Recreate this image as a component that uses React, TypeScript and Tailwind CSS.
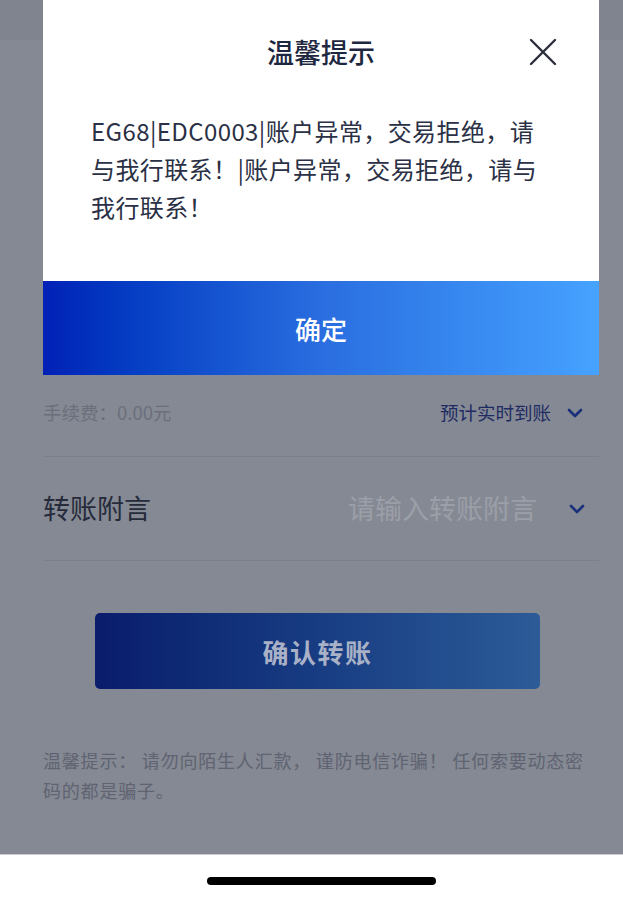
import { useState } from "react";

const font = { fontFamily: '"Noto Sans CJK SC", "Noto Sans", sans-serif' };

function Chevron({ className }: { className?: string }) {
  return (
    <svg viewBox="0 0 16 10" className={className} fill="none">
      <polyline points="2,2 8,8 14,2" stroke="currentColor" strokeWidth="2.6" strokeLinecap="round" strokeLinejoin="round" />
    </svg>
  );
}

function CloseIcon() {
  return (
    <svg viewBox="0 0 28 28" className="w-[28px] h-[28px]" fill="none">
      <path d="M2 2 L26 26 M26 2 L2 26" stroke="#2b2f3a" strokeWidth="2.4" strokeLinecap="round" />
    </svg>
  );
}

export default function App() {
  const [open, setOpen] = useState(true);

  return (
    <div className="relative w-[623px] h-[907px] overflow-hidden bg-white" style={font}>
      {/* ====== page behind the dialog (dimmed) ====== */}
      <div className="h-[854px] bg-[#858993] flex flex-col">
        <div className="h-[40px] bg-[#80848e]" />
        <div className="h-[335px]" />

        <div className="pl-[43px] pr-[24px]">
          <div className="h-[82px] flex items-center justify-between pb-[6px] border-b border-[#7c808a]">
            <span className="text-[18.5px] text-[#6b6f7c]">手续费：0.00元</span>
            <div className="flex items-center gap-[16px] pr-[16px]">
              <span className="text-[18.5px] text-[#1e2c63]">预计实时到账</span>
              <Chevron className="w-[16px] h-[10px] text-[#1a2f7a]" />
            </div>
          </div>

          <div className="h-[104px] flex items-center justify-between border-b border-[#7c808a]">
            <span className="text-[27px] text-[#262b3b]">转账附言</span>
            <div className="flex items-center gap-[32px] pr-[14px]">
              <span className="text-[27px] text-[#9b9fa8]">请输入转账附言</span>
              <Chevron className="w-[16px] h-[10px] text-[#1a2f7a]" />
            </div>
          </div>

          <div className="mt-[52px] ml-[52px] w-[445px] h-[76px] rounded-[5px] bg-gradient-to-r from-[#0a1c6c] to-[#2c5b98] flex items-center justify-center">
            <span className="text-[26px] font-bold text-[#a9b1c7] tracking-[1.5px]">确认转账</span>
          </div>

          <p className="mt-[56px] text-[18px] leading-[30px] tracking-[0.8px] text-[#5f6372]">
            温馨提示： 请勿向陌生人汇款， 谨防电信诈骗！ 任何索要动态密<br />码的都是骗子。
          </p>
        </div>
      </div>

      {/* ====== home indicator area ====== */}
      <div className="h-[53px] bg-white border-t border-[#c9cbd1] flex items-center pl-[207px]">
        <div className="w-[229px] h-[8px] rounded-full bg-black" />
      </div>

      {/* ====== dialog ====== */}
      {open && (
        <div className="absolute left-[43px] top-0 w-[556px] bg-white">
          <div className="h-[281px] px-[48px] pt-[34px]">
            <div className="relative h-[36px] flex items-center justify-center">
              <h2 className="text-[27px] leading-[36px] font-medium text-[#1e2740]">温馨提示</h2>
              <button onClick={() => setOpen(false)} className="absolute right-[-6px] top-[4px]">
                <CloseIcon />
              </button>
            </div>
            <p className="mt-[42px] text-[24px] leading-[38px] tracking-[0.4px] text-[#2a3045]">
              EG68|EDC0003|账户异常，交易拒绝，请
              <br />
              与我行联系！|账户异常，交易拒绝，请与
              <br />
              我行联系！
            </p>
          </div>
          <button className="w-full h-[94px] bg-gradient-to-r from-[#0220b6] via-[#2a6de0] to-[#46a2ff] flex items-center justify-center">
            <span className="text-[26px] font-medium text-white">确定</span>
          </button>
        </div>
      )}
    </div>
  );
}
